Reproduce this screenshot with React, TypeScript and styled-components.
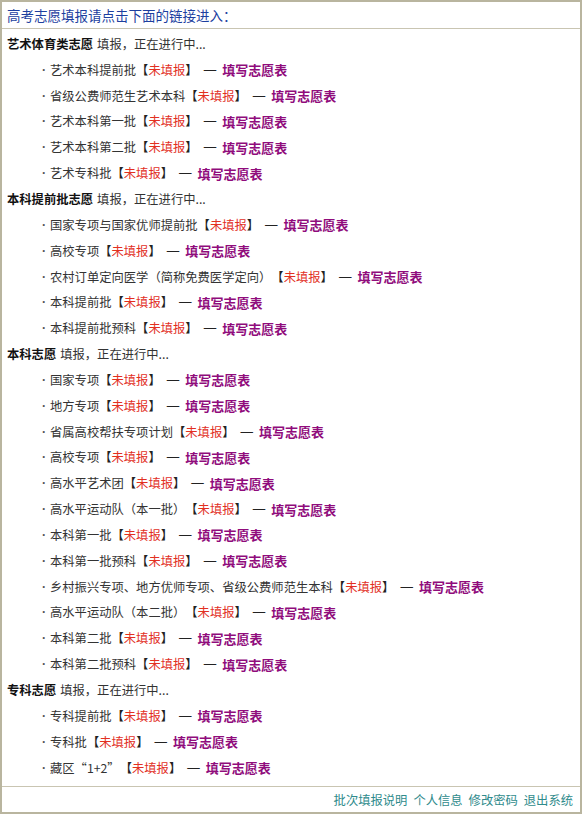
import React from "react";
import styled, { createGlobalStyle } from "styled-components";

const GlobalStyle = createGlobalStyle`
  html, body { margin: 0; padding: 0; background: #ffffff; }
  body { font-family: "Noto Sans CJK SC", "Noto Sans", sans-serif; }
`;

const Frame = styled.div`
  box-sizing: border-box;
  width: 582px;
  height: 814px;
  border: 2px solid #b9b59f;
  display: flex;
  flex-direction: column;
  background: #fff;
`;

const Header = styled.div`
  height: 26px;
  display: flex;
  align-items: center;
  padding-left: 5px;
  border-bottom: 1px solid #c9c5b2;
  color: #1d3f9f;
  font-size: 13.5px;
`;

const Body = styled.div`
  flex: 1;
  display: flex;
  flex-direction: column;
  padding-top: 2px;
`;

const Row = styled.div<{ $indent?: boolean }>`
  height: 25.85px;
  display: flex;
  align-items: center;
  padding-left: ${(p) => (p.$indent ? "40px" : "5px")};
  font-size: 12.3px;
  color: #333;
  white-space: nowrap;
`;

const SectionTitle = styled.span`
  font-weight: bold;
  color: #111;
  margin-right: 4px;
`;

const Dot = styled.span`
  display: inline-block;
  width: 8px;
  color: #555;
  font-family: "Liberation Sans", sans-serif;
  font-weight: bold;
`;

const Bracket = styled.span`
  color: #222;
`;

const Status = styled.span`
  color: #e2301f;
`;

const Dash = styled.span`
  margin: 0 6px 0 6px;
  color: #222;
  font-family: "Liberation Sans", sans-serif;
  font-size: 12.5px;
`;

const Link = styled.a`
  color: #900c7c;
  font-weight: bold;
  font-size: 13px;
  text-decoration: none;
`;

const Footer = styled.div`
  height: 25px;
  border-top: 1px solid #c9c5b2;
  display: flex;
  align-items: center;
  justify-content: flex-end;
  gap: 6px;
  padding-right: 7px;
  font-size: 12.3px;
`;

const FooterLink = styled.a`
  color: #2f8b8c;
  text-decoration: none;
`;

const sections: { title: string; items: string[] }[] = [
  {
    title: "艺术体育类志愿",
    items: ["艺术本科提前批", "省级公费师范生艺术本科", "艺术本科第一批", "艺术本科第二批", "艺术专科批"],
  },
  {
    title: "本科提前批志愿",
    items: ["国家专项与国家优师提前批", "高校专项", "农村订单定向医学（简称免费医学定向）", "本科提前批", "本科提前批预科"],
  },
  {
    title: "本科志愿",
    items: [
      "国家专项",
      "地方专项",
      "省属高校帮扶专项计划",
      "高校专项",
      "高水平艺术团",
      "高水平运动队（本一批）",
      "本科第一批",
      "本科第一批预科",
      "乡村振兴专项、地方优师专项、省级公费师范生本科",
      "高水平运动队（本二批）",
      "本科第二批",
      "本科第二批预科",
    ],
  },
  {
    title: "专科志愿",
    items: ["专科提前批", "专科批", "藏区“1+2”"],
  },
];

export default function App() {
  return (
    <>
      <GlobalStyle />
      <Frame>
        <Header>高考志愿填报请点击下面的链接进入：</Header>
        <Body>
          {sections.map((s) => (
            <React.Fragment key={s.title}>
              <Row>
                <SectionTitle>{s.title}</SectionTitle>
                填报，正在进行中...
              </Row>
              {s.items.map((it) => (
                <Row $indent key={it}>
                  <Dot>·</Dot>
                  {it}
                  <Bracket>【</Bracket>
                  <Status>未填报</Status>
                  <Bracket>】</Bracket>
                  <Dash>—</Dash>
                  <Link href="#">填写志愿表</Link>
                </Row>
              ))}
            </React.Fragment>
          ))}
        </Body>
        <Footer>
          <FooterLink href="#">批次填报说明</FooterLink>
          <FooterLink href="#">个人信息</FooterLink>
          <FooterLink href="#">修改密码</FooterLink>
          <FooterLink href="#">退出系统</FooterLink>
        </Footer>
      </Frame>
    </>
  );
}
